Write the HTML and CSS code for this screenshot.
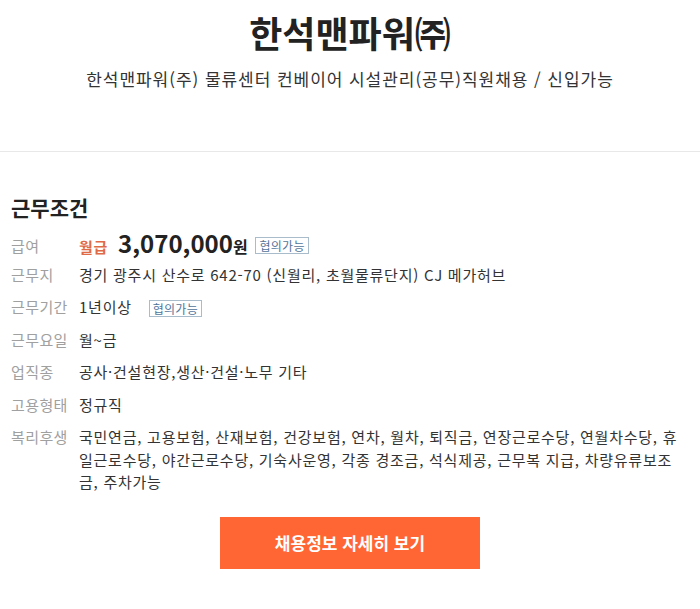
FILE: index.html
```html
<!DOCTYPE html>
<html lang="ko">

<head>
    <meta charset="UTF-8">
    <meta name="viewport" content="width=device-width, initial-scale=1.0">
    <title>한석맨파워㈜ 채용</title>
    <link rel="stylesheet" href="styles.css">
</head>

<body>

    <div class="header">
        <h1 class="company">한석맨파워㈜</h1>
        <p class="job-title">한석맨파워(주) 물류센터 컨베이어 시설관리(공무)직원채용 / 신입가능</p>
    </div>

    <div class="conditions">
        <h2 class="section-title">근무조건</h2>

        <dl class="info-list">
            <div class="info-row pay-row">
                <dt>급여</dt>
                <dd class="salary">
                    <span class="pay-type">월급</span>
                    <span class="pay-amount">3,070,000</span><span class="pay-unit">원</span>
                    <span class="tag">협의가능</span>
                </dd>
            </div>
            <div class="info-row">
                <dt>근무지</dt>
                <dd>경기 광주시 산수로 642-70 (신월리, 초월물류단지) CJ 메가허브</dd>
            </div>
            <div class="info-row">
                <dt>근무기간</dt>
                <dd>1년이상 <span class="tag">협의가능</span></dd>
            </div>
            <div class="info-row">
                <dt>근무요일</dt>
                <dd>월~금</dd>
            </div>
            <div class="info-row">
                <dt>업직종</dt>
                <dd>공사·건설현장,생산·건설·노무 기타</dd>
            </div>
            <div class="info-row">
                <dt>고용형태</dt>
                <dd>정규직</dd>
            </div>
            <div class="info-row">
                <dt>복리후생</dt>
                <dd>국민연금, 고용보험, 산재보험, 건강보험, 연차, 월차, 퇴직금, 연장근로수당, 연월차수당, 휴일근로수당, 야간근로수당, 기숙사운영, 각종 경조금, 석식제공, 근무복 지급, 차량유류보조금, 주차가능</dd>
            </div>
        </dl>

        <div class="action">
            <a class="detail-btn" href="#">채용정보 자세히 보기</a>
        </div>
    </div>

</body>

</html>
```

FILE: styles.css
```css
/* job posting summary */
body {
    margin: 0;
    background: #fff;
    color: #333;
    font-family: "Noto Sans CJK KR", "Noto Sans", sans-serif;
}

.header {
    text-align: center;
    padding: 6px 0 61px;
    border-bottom: 1px solid #e8e8e8;
}

.company {
    margin: 0;
    font-size: 36px;
    font-weight: 700;
    color: #222;
    line-height: 52px;
}

.job-title {
    margin: 10px 0 0;
    font-size: 17px;
    line-height: 22px;
    letter-spacing: 0.95px;
    color: #333;
}

.conditions {
    padding: 0 11px;
}

.section-title {
    margin: 41px 0 0;
    font-size: 21px;
    font-weight: 700;
    line-height: 28px;
    color: #222;
}

.info-list {
    margin: 2px 0 0;
}

.info-row {
    display: flex;
    padding: 5px 0;
    font-size: 15px;
    line-height: 22.5px;
    letter-spacing: 0.75px;
}

.info-row.pay-row {
    padding: 9px 0 0;
}

.info-row dt {
    flex: 0 0 68px;
    color: #a0a0a0;
    letter-spacing: 0.4px;
}

.pay-row dt {
    padding-top: 3px;
}

.info-row dd {
    margin: 0;
    flex: 1;
    color: #333;
}

.salary {
    display: flex;
    align-items: baseline;
}

.pay-type {
    color: #e06a45;
    font-weight: 700;
    font-size: 15px;
    margin-right: 10px;
}

.pay-amount {
    font-size: 24px;
    font-weight: 700;
    color: #222;
    line-height: 22px;
    letter-spacing: 0;
}

.pay-unit {
    font-size: 16px;
    font-weight: 700;
    color: #222;
}

.tag {
    display: inline-block;
    border: 1px solid #a9bccc;
    color: #52749a;
    font-size: 12px;
    line-height: 15px;
    padding: 0 3px;
    margin-left: 12px;
    letter-spacing: 0.3px;
    vertical-align: middle;
}

.salary .tag {
    margin-left: 7px;
    align-self: center;
}

.action {
    display: flex;
    justify-content: center;
    padding: 18px 0 40px;
}

.detail-btn {
    display: block;
    width: 260px;
    height: 52px;
    line-height: 52px;
    text-align: center;
    background: #ff6633;
    color: #fff;
    font-size: 17px;
    font-weight: 700;
    text-decoration: none;
}
```
